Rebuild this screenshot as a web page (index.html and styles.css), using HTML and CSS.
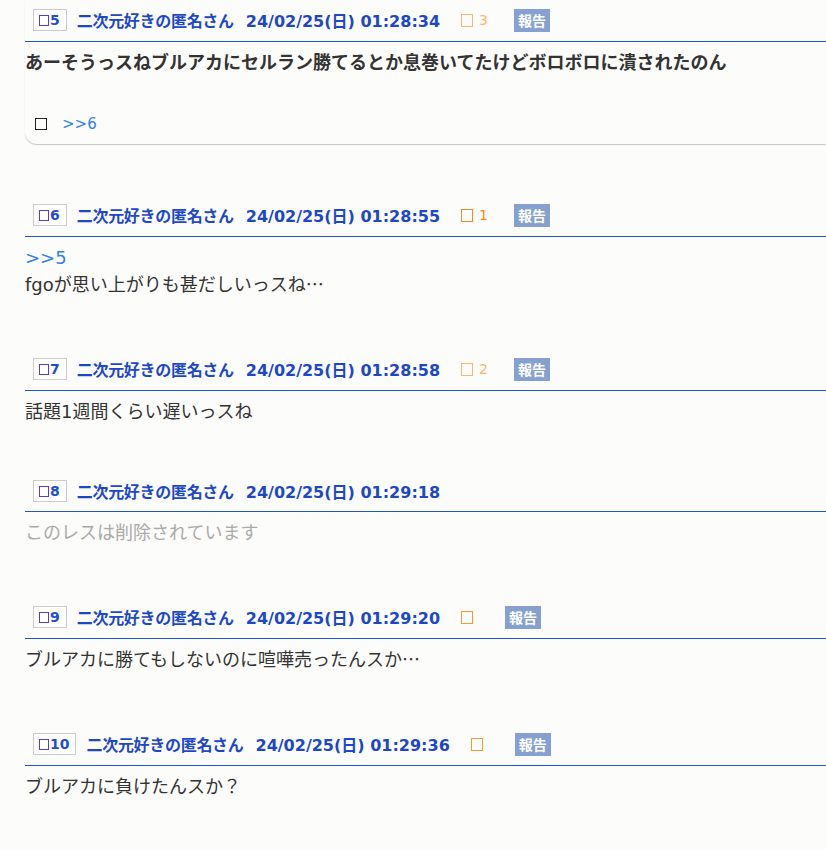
FILE: index.html
```html
<!DOCTYPE html>
<html lang="ja">
<head>
<meta charset="utf-8">
<link rel="stylesheet" href="styles.css">
</head>
<body>
<div class="thread">

  <div class="post card">
    <div class="post-head">
      <span class="num"><span class="ico ico-num"></span>5</span>
      <span class="name">二次元好きの匿名さん</span>
      <span class="date">24/02/25(日) 01:28:34</span>
      <span class="count light"><span class="ico ico-count"></span>3</span>
      <span class="report">報告</span>
    </div>
    <div class="post-body bold">あーそうっスねブルアカにセルラン勝てるとか息巻いてたけどボロボロに潰されたのん</div>
    <div class="post-foot">
      <span class="ico ico-foot"></span>
      <span class="anchor small">&gt;&gt;6</span>
    </div>
  </div>

  <div class="post">
    <div class="post-head">
      <span class="num"><span class="ico ico-num"></span>6</span>
      <span class="name">二次元好きの匿名さん</span>
      <span class="date">24/02/25(日) 01:28:55</span>
      <span class="count strong"><span class="ico ico-count"></span>1</span>
      <span class="report">報告</span>
    </div>
    <div class="post-body"><span class="anchor">&gt;&gt;5</span><br>fgoが思い上がりも甚だしいっスね<span class="cjk">…</span></div>
  </div>

  <div class="post post-before-deleted">
    <div class="post-head">
      <span class="num"><span class="ico ico-num"></span>7</span>
      <span class="name">二次元好きの匿名さん</span>
      <span class="date">24/02/25(日) 01:28:58</span>
      <span class="count light"><span class="ico ico-count"></span>2</span>
      <span class="report">報告</span>
    </div>
    <div class="post-body">話題1週間くらい遅いっスね</div>
  </div>

  <div class="post post-deleted">
    <div class="post-head">
      <span class="num"><span class="ico ico-num"></span>8</span>
      <span class="name">二次元好きの匿名さん</span>
      <span class="date">24/02/25(日) 01:29:18</span>
    </div>
    <div class="post-body deleted">このレスは削除されています</div>
  </div>

  <div class="post">
    <div class="post-head">
      <span class="num"><span class="ico ico-num"></span>9</span>
      <span class="name">二次元好きの匿名さん</span>
      <span class="date">24/02/25(日) 01:29:20</span>
      <span class="count empty"><span class="ico ico-count"></span></span>
      <span class="report">報告</span>
    </div>
    <div class="post-body">ブルアカに勝てもしないのに喧嘩売ったんスか<span class="cjk">…</span></div>
  </div>

  <div class="post">
    <div class="post-head">
      <span class="num"><span class="ico ico-num"></span>10</span>
      <span class="name">二次元好きの匿名さん</span>
      <span class="date">24/02/25(日) 01:29:36</span>
      <span class="count empty"><span class="ico ico-count"></span></span>
      <span class="report">報告</span>
    </div>
    <div class="post-body">ブルアカに負けたんスか？</div>
  </div>

</div>
</body>
</html>
```

FILE: styles.css
```css
html, body {
  margin: 0;
  padding: 0;
  background: #fcfcfa;
}
body {
  font-family: "DejaVu Sans", "Noto Sans CJK JP", sans-serif;
  color: #333;
  overflow-x: hidden;
}
.thread {
  padding-left: 25px;
}
.post {
  margin-bottom: 51px;
}
.post-before-deleted {
  margin-bottom: 46px;
}
.post-deleted .post-head {
  padding-bottom: 8px;
}
.card {
  border-radius: 0 0 0 12px;
  box-shadow: 0 1px 1px rgba(0, 0, 0, 0.22);
  padding-bottom: 9px;
  margin-bottom: 51px;
}
.post-head {
  display: flex;
  align-items: center;
  padding: 8px 0 9px 8px;
  border-bottom: 1px solid #1d55d0;
  white-space: nowrap;
}
.num {
  display: inline-flex;
  align-items: center;
  height: 20px;
  padding: 0 6px 0 5px;
  border: 1px solid #cccccc;
  background: #ffffff;
  font-size: 14px;
  font-weight: bold;
  color: #1c4fd0;
  line-height: 20px;
}
.ico {
  display: inline-block;
  box-sizing: border-box;
}
.ico-num {
  width: 10px;
  height: 11px;
  border: 1.5px solid #5a3ad6;
  margin-right: 1px;
}
.name {
  margin-left: 10px;
  font-family: "Noto Sans CJK JP", sans-serif;
  font-size: 16px;
  font-weight: bold;
  color: #1c48c8;
  letter-spacing: -0.3px;
}
.date {
  margin-left: 12px;
  font-size: 16px;
  font-weight: bold;
  color: #1c48c8;
}
.count {
  margin-left: 21px;
  display: inline-flex;
  align-items: center;
  font-size: 14px;
  line-height: 16px;
}
.ico-count {
  width: 12px;
  height: 13px;
  border: 1.5px solid currentColor;
  margin-right: 6px;
}
.count.light { color: #f9b66e; }
.count.strong { color: #f28a22; }
.count.empty { color: #f49a2e; }
.report {
  margin-left: 26px;
  display: inline-block;
  width: 36px;
  height: 23px;
  line-height: 23px;
  text-align: center;
  background: #86a1cf;
  color: #ffffff;
  font-family: "Noto Sans CJK JP", sans-serif;
  font-size: 14px;
  font-weight: bold;
}
.post-body {
  padding-top: 7px;
  font-size: 18px;
  line-height: 27px;
  white-space: nowrap;
}
.cjk {
  font-family: "Noto Sans CJK JP", sans-serif;
  line-height: 1;
}
.bold {
  font-weight: bold;
}
.deleted {
  color: #aaaaaa;
}
.anchor {
  color: #2f80ee;
}
.anchor.small {
  font-size: 15px;
}
.post-foot {
  display: flex;
  align-items: center;
  margin-top: 37px;
  padding-left: 10px;
  height: 22px;
}
.ico-foot {
  width: 12px;
  height: 12px;
  border: 1.5px solid #222;
  margin-right: 15px;
}
```
